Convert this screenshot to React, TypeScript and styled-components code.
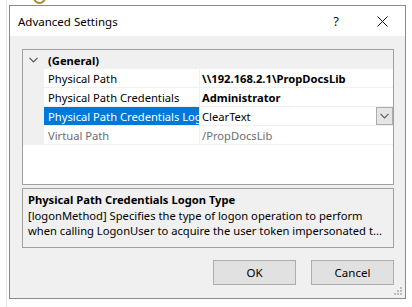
import React, { FC } from "react";
import styled, { createGlobalStyle } from "styled-components";

const GlobalStyle = createGlobalStyle`
  html, body {
    margin: 0;
    padding: 0;
    background: #ffffff;
  }
  body {
    font-family: "Noto Sans", "Open Sans", sans-serif;
    font-size: 11.2px;
    color: #000000;
  }
`;

// the desktop behind the dialog
const Desktop = styled.div`
  position: relative;
  width: 412px;
  height: 307px;
  overflow: hidden;
  padding: 5px 0 0 9px;
  box-sizing: border-box;
`;

const BackLine = styled.div`
  position: absolute;
  left: 6px;
  top: 0;
  width: 1px;
  height: 307px;
  background: #e3e3e3;
`;

const BackRing = styled.div`
  position: absolute;
  left: 33px;
  top: -9px;
  width: 9px;
  height: 9px;
  border: 2px solid #a98a2c;
  border-radius: 50%;
`;

const Dialog = styled.div`
  position: relative;
  width: 397px;
  height: 294px;
  box-sizing: border-box;
  border: 1px solid #8a8a8a;
  background: #f0f0f0;
  display: flex;
  flex-direction: column;
`;

const TitleBar = styled.div`
  height: 30px;
  background: #ffffff;
  display: flex;
  align-items: center;
  padding-left: 8px;
`;

const Title = styled.div`
  flex: 1;
  font-size: 11.5px;
  color: #000;
  margin-top: 1px;
`;

const TitleButton = styled.div`
  width: 46px;
  height: 30px;
  display: flex;
  align-items: center;
  justify-content: center;
  font-size: 13px;
  color: #111;
`;

const Body = styled.div`
  flex: 1;
  display: flex;
  flex-direction: column;
  padding: 13px 11px 0 12px;
`;

const Grid = styled.div`
  height: 136px;
  box-sizing: border-box;
  border: 1px solid #a0a0a0;
  background: #ffffff;
  display: flex;
  flex-direction: column;
`;

const CategoryRow = styled.div`
  height: 19px;
  background: #f0f0f0;
  display: flex;
  align-items: center;
`;

const Gutter = styled.div`
  width: 21px;
  height: 100%;
  background: #f0f0f0;
  display: flex;
  align-items: center;
  justify-content: center;
  flex-shrink: 0;
`;

const CategoryName = styled.div`
  font-weight: bold;
  padding-left: 4px;
  padding-top: 1px;
`;

const Row = styled.div`
  height: 19px;
  display: flex;
  box-sizing: border-box;
  border-bottom: 1px solid #f0f0f0;
`;

const Label = styled.div<{ $selected?: boolean; $muted?: boolean }>`
  width: 156px;
  flex-shrink: 0;
  padding-left: 4px;
  box-sizing: border-box;
  white-space: nowrap;
  overflow: hidden;
  line-height: 19px;
  border-right: 1px solid #f0f0f0;
  background: ${({ $selected }) => ($selected ? "#0078d7" : "#ffffff")};
  color: ${({ $selected, $muted }) =>
    $selected ? "#ffffff" : $muted ? "#6d6d6d" : "#000000"};
`;

const Value = styled.div<{ $bold?: boolean; $muted?: boolean }>`
  flex: 1;
  display: flex;
  align-items: center;
  padding-left: 2px;
  white-space: nowrap;
  overflow: hidden;
  font-weight: ${({ $bold }) => ($bold ? "bold" : "normal")};
  color: ${({ $muted }) => ($muted ? "#6d6d6d" : "#000000")};
`;

const ValueText = styled.span`
  flex: 1;
  padding-top: 1px;
`;

const DropButton = styled.div`
  width: 17px;
  height: 18px;
  box-sizing: border-box;
  border: 1px solid #adadad;
  background: #e5e5e5;
  display: flex;
  align-items: center;
  justify-content: center;
`;

const Description = styled.div`
  margin-top: 3px;
  height: 60px;
  box-sizing: border-box;
  border: 1px solid #a0a0a0;
  background: #f0f0f0;
  padding: 3px 5px;
  line-height: 15px;
  white-space: nowrap;
  overflow: hidden;
`;

const DescTitle = styled.div`
  font-weight: bold;
  margin-bottom: 1px;
`;

const Footer = styled.div`
  display: flex;
  justify-content: flex-end;
  gap: 15px;
  padding-top: 12px;
`;

const Button = styled.div`
  width: 83px;
  height: 25px;
  box-sizing: border-box;
  border: 1px solid #adadad;
  background: #e1e1e1;
  display: flex;
  align-items: center;
  justify-content: center;
  font-size: 11.5px;
`;

const Grip = styled.svg`
  position: absolute;
  right: 2px;
  bottom: 2px;
`;

const Chevron: FC<{ color: string }> = ({ color }) => (
  <svg width="9" height="6" viewBox="0 0 9 6">
    <path d="M0.5 0.8 L4.5 4.8 L8.5 0.8" fill="none" stroke={color} strokeWidth="1.2" />
  </svg>
);

interface IProp {
  label: string;
  value: string;
  bold?: boolean;
  selected?: boolean;
  muted?: boolean;
  dropdown?: boolean;
}

const props: IProp[] = [
  { label: "Physical Path", value: "\\\\192.168.2.1\\PropDocsLib", bold: true },
  { label: "Physical Path Credentials", value: "Administrator", bold: true },
  {
    label: "Physical Path Credentials Logon Type",
    value: "ClearText",
    selected: true,
    dropdown: true,
  },
  { label: "Virtual Path", value: "/PropDocsLib", muted: true },
];

const App: FC = () => {
  return (
    <Desktop>
      <GlobalStyle />
      <BackLine />
      <BackRing />
      <Dialog>
        <TitleBar>
          <Title>Advanced Settings</Title>
          <TitleButton>?</TitleButton>
          <TitleButton>
            <svg width="11" height="11" viewBox="0 0 11 11">
              <path d="M0.5 0.5 L10.5 10.5 M10.5 0.5 L0.5 10.5" stroke="#111" strokeWidth="1" />
            </svg>
          </TitleButton>
        </TitleBar>
        <Body>
          <Grid>
            <CategoryRow>
              <Gutter>
                <Chevron color="#555" />
              </Gutter>
              <CategoryName>(General)</CategoryName>
            </CategoryRow>
            {props.map((p) => (
              <Row key={p.label}>
                <Gutter />
                <Label $selected={p.selected} $muted={p.muted}>
                  {p.label}
                </Label>
                <Value $bold={p.bold} $muted={p.muted}>
                  <ValueText>{p.value}</ValueText>
                  {p.dropdown && (
                    <DropButton>
                      <Chevron color="#606060" />
                    </DropButton>
                  )}
                </Value>
              </Row>
            ))}
          </Grid>
          <Description>
            <DescTitle>Physical Path Credentials Logon Type</DescTitle>
            <div>[logonMethod] Specifies the type of logon operation to perform</div>
            <div>when calling LogonUser to acquire the user token impersonated t...</div>
          </Description>
          <Footer>
            <Button>OK</Button>
            <Button>Cancel</Button>
          </Footer>
        </Body>
        <Grip width="9" height="9" viewBox="0 0 9 9">
          {[
            [6, 0],
            [3, 3],
            [6, 3],
            [0, 6],
            [3, 6],
            [6, 6],
          ].map(([x, y]) => (
            <rect key={`${x}-${y}`} x={x} y={y} width="2" height="2" fill="#bcbcbc" />
          ))}
        </Grip>
      </Dialog>
    </Desktop>
  );
};

export default App;
